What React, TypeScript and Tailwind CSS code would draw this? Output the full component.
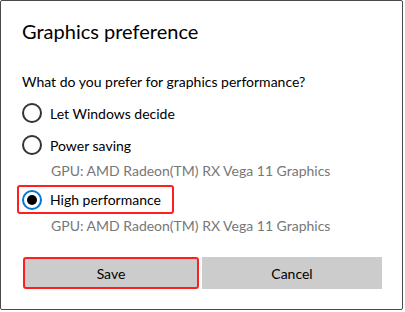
const font = { fontFamily: 'Lato, "Noto Sans", sans-serif' };

function Radio({ checked }: { checked?: boolean }) {
  if (checked) {
    return (
      <span className="flex h-5 w-5 shrink-0 items-center justify-center rounded-full border-2 border-[#0078d7]">
        <span className="h-[10px] w-[10px] rounded-full bg-black" />
      </span>
    );
  }
  return <span className="h-5 w-5 shrink-0 rounded-full border-2 border-[#333]" />;
}

export default function App() {
  return (
    <div className="h-[312px] w-[405px] bg-white text-black" style={font}>
      <div className="flex h-[310px] w-[403px] flex-col rounded-[2px] border border-[#4a4a4a] pl-[21px] pt-4">
        <h1 className="h-7 whitespace-nowrap text-[20px] leading-7">Graphics preference</h1>

        <p className="mt-[27px] h-5 whitespace-nowrap text-[14px] leading-5">
          What do you prefer for graphics performance?
        </p>

        <div className="mt-[5px] flex h-8 items-center gap-2">
          <Radio />
          <span className="whitespace-nowrap text-[14px]">Let Windows decide</span>
        </div>
        <div className="flex h-8 items-center gap-2">
          <Radio />
          <span className="whitespace-nowrap text-[14px]">Power saving</span>
        </div>
        <p className="h-5 whitespace-nowrap pl-[29px] text-[14px] leading-5 text-[#777]">
          GPU: AMD Radeon(TM) RX Vega 11 Graphics
        </p>

        <div className="mt-[4px] ml-[-5px] flex h-[29px] w-[157px] items-center gap-2 rounded-[3px] border-2 border-[#ff1f1f] pl-[3px]">
          <Radio checked />
          <span className="whitespace-nowrap text-[14px]">High performance</span>
        </div>
        <p className="mt-[2px] h-5 whitespace-nowrap pl-[29px] text-[14px] leading-5 text-[#777]">
          GPU: AMD Radeon(TM) RX Vega 11 Graphics
        </p>

        <div className="mt-[21px] flex gap-[3px] pl-[1px]">
          <button
            type="button"
            className="h-8 w-[176px] rounded-[3px] border-2 border-[#ff1f1f] bg-[#cccccc] text-[14px]"
          >
            Save
          </button>
          <button type="button" className="h-8 w-[180px] bg-[#cccccc] text-[14px]">
            Cancel
          </button>
        </div>
      </div>
    </div>
  );
}
